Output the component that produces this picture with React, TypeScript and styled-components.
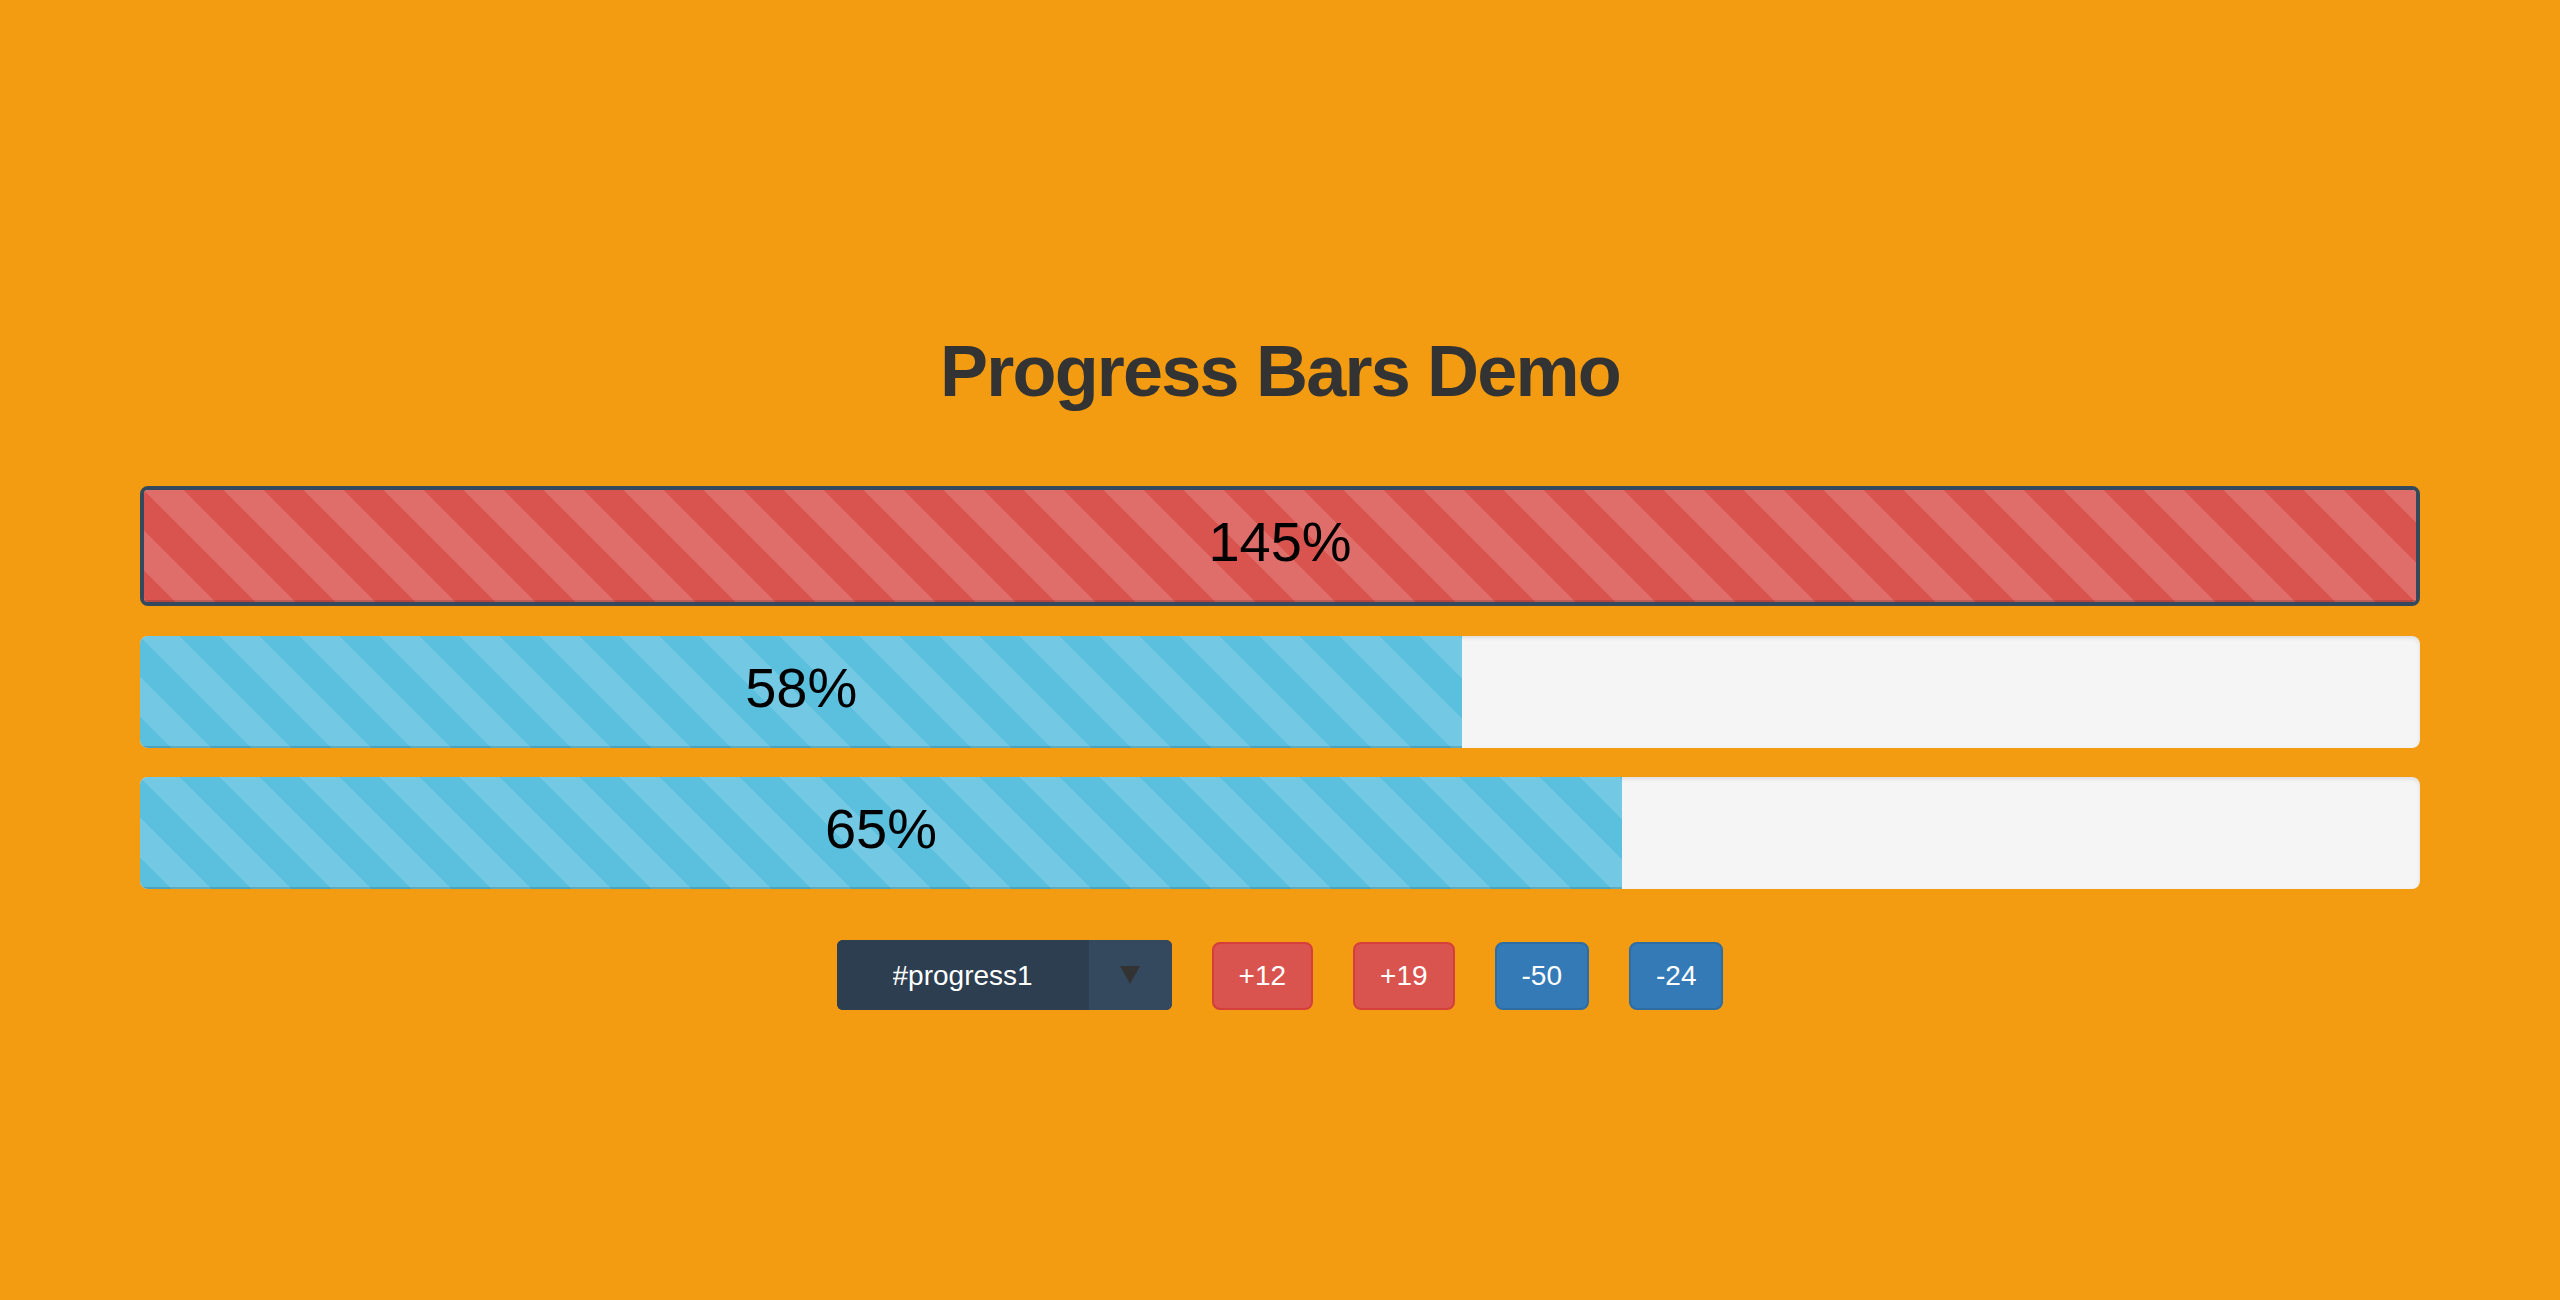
import React, { useState } from "react";
import styled, { createGlobalStyle, css } from "styled-components";

const GlobalStyle = createGlobalStyle`
  html, body {
    margin: 0;
    padding: 0;
    background: #f39c12;
  }
  body {
    font-family: "Liberation Sans", Arial, Helvetica, sans-serif;
    color: #333;
  }
  * { box-sizing: border-box; }
`;

const Page = styled.main`
  min-height: 1300px;
  padding: 331px 140px 0;
  background: #f39c12;
`;

const Title = styled.h1`
  margin: 0 0 75px;
  font-size: 72px;
  line-height: 80px;
  font-weight: 700;
  letter-spacing: -1.8px;
  text-align: center;
  color: #333;
`;

const BarList = styled.section`
  display: flex;
  flex-direction: column;
  gap: 29px;
`;

const Track = styled.div<{ $selected: boolean }>`
  height: ${(p) => (p.$selected ? 120 : 112)}px;
  margin-bottom: ${(p) => (p.$selected ? 1 : 0)}px;
  background: #f5f5f5;
  border-radius: 8px;
  overflow: hidden;
  box-shadow: inset 0 2px 4px rgba(0, 0, 0, 0.1);
  ${(p) =>
    p.$selected &&
    css`
      border: 4px solid #34495e;
    `}
`;

const Fill = styled.div<{ $over: boolean }>`
  height: 100%;
  background-color: ${(p) => (p.$over ? "#d9534f" : "#5bc0de")};
  background-image: linear-gradient(
    45deg,
    rgba(255, 255, 255, 0.15) 25%,
    transparent 25%,
    transparent 50%,
    rgba(255, 255, 255, 0.15) 50%,
    rgba(255, 255, 255, 0.15) 75%,
    transparent 75%,
    transparent
  );
  background-size: 80px 80px;
  box-shadow: inset 0 -2px 0 rgba(0, 0, 0, 0.15);
  color: #000;
  font-size: 56px;
  line-height: 104px;
  text-align: center;
  white-space: nowrap;
`;

const Controls = styled.div`
  margin-top: 51px;
  display: flex;
  justify-content: center;
  align-items: flex-end;
  gap: 40px;
`;

const SelectBox = styled.div`
  display: flex;
  width: 335px;
  height: 70px;
  border-radius: 6px;
  overflow: hidden;
  background: #2c3e50;
`;

const NativeSelect = styled.select`
  flex: 1;
  appearance: none;
  -webkit-appearance: none;
  border: 0;
  outline: none;
  margin: 0;
  padding: 0 0 0 56px;
  background: #2c3e50;
  color: #fff;
  font-family: "Liberation Sans", Arial, Helvetica, sans-serif;
  font-size: 28px;
  cursor: pointer;
`;

const ArrowBox = styled.span`
  width: 83px;
  display: flex;
  align-items: center;
  justify-content: center;
  background: #34495e;
  pointer-events: none;
`;

const ActionButton = styled.button<{ $tone: "red" | "blue" }>`
  height: 68px;
  padding: 0 25px;
  border-radius: 8px;
  border: 2px solid ${(p) => (p.$tone === "red" ? "#d43f3a" : "#2e6da4")};
  background: ${(p) => (p.$tone === "red" ? "#d9534f" : "#337ab7")};
  color: #fff;
  font-family: "Liberation Sans", Arial, Helvetica, sans-serif;
  font-size: 28px;
  line-height: 1;
  cursor: pointer;
`;

const buttons = [12, 19, -50, -24];

export default function App() {
  const [values, setValues] = useState<number[]>([145, 58, 65]);
  const [selected, setSelected] = useState(0);

  const apply = (delta: number) => {
    setValues((v) => v.map((x, i) => (i === selected ? Math.max(0, x + delta) : x)));
  };

  return (
    <>
      <GlobalStyle />
      <Page>
        <Title>Progress Bars Demo</Title>
        <BarList>
          {values.map((v, i) => (
            <Track key={i} $selected={i === selected}>
              <Fill $over={v > 100} style={{ width: `${Math.min(v, 100)}%` }}>
                {v}%
              </Fill>
            </Track>
          ))}
        </BarList>
        <Controls>
          <SelectBox>
            <NativeSelect
              value={selected}
              onChange={(e) => setSelected(Number(e.target.value))}
            >
              {values.map((_, i) => (
                <option key={i} value={i}>
                  #progress{i + 1}
                </option>
              ))}
            </NativeSelect>
            <ArrowBox>
              <svg width="20" height="18" viewBox="0 0 20 18">
                <polygon points="0,0 20,0 10,18" fill="#333" />
              </svg>
            </ArrowBox>
          </SelectBox>
          {buttons.map((b) => (
            <ActionButton key={b} $tone={b > 0 ? "red" : "blue"} onClick={() => apply(b)}>
              {b > 0 ? `+${b}` : `${b}`}
            </ActionButton>
          ))}
        </Controls>
      </Page>
    </>
  );
}
